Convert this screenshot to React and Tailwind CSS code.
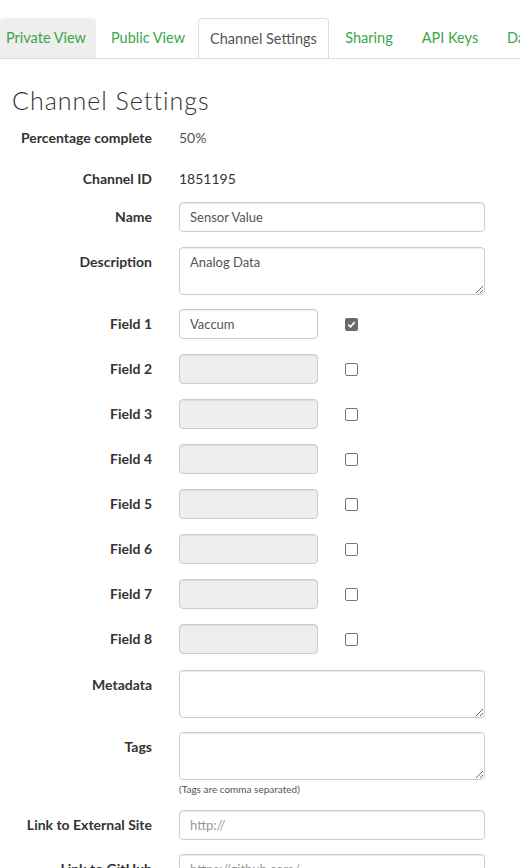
import React from "react";

const font = { fontFamily: "Lato, 'Liberation Sans', sans-serif" };

function Tab({ label, active, muted, className = "" }) {
  if (active) {
    return (
      <div
        className={`relative -mb-px flex h-[41px] shrink-0 items-center justify-center rounded-t-[4px] border border-b-0 border-[#ddd] bg-white text-[14.5px] text-[#555] ${className}`}
      >
        {label}
      </div>
    );
  }
  return (
    <div
      className={`flex h-[40px] shrink-0 items-center justify-center rounded-t-[4px] text-[14.5px] text-[#3aa648] ${
        muted ? "bg-[#eee]" : ""
      } ${className}`}
    >
      {label}
    </div>
  );
}

function Row({ label, children, className = "" }) {
  return (
    <div className={`flex ${className}`}>
      <div className="w-[152px] shrink-0 pt-[6px] text-right text-[14px] font-bold leading-[18px] text-[#333]">
        {label}
      </div>
      <div className="ml-[27px] flex-1">{children}</div>
    </div>
  );
}

function TextInput({ value, placeholder, disabled, className = "w-[306px]" }) {
  return (
    <input
      readOnly
      defaultValue={value}
      placeholder={placeholder}
      className={`h-[30px] rounded-[4px] border border-[#ccc] px-[10px] text-[13px] text-[#555] shadow-[inset_0_1px_1px_rgba(0,0,0,0.075)] outline-none placeholder:text-[#999] ${
        disabled ? "bg-[#eee]" : "bg-white"
      } ${className}`}
      style={font}
    />
  );
}

function TextArea({ value }) {
  return (
    <textarea
      readOnly
      defaultValue={value}
      className="block h-[48px] w-[306px] rounded-[4px] border border-[#ccc] bg-white px-[10px] py-[5px] text-[13px] leading-[18px] text-[#555] shadow-[inset_0_1px_1px_rgba(0,0,0,0.075)] outline-none"
      style={font}
    />
  );
}

function Check({ checked }) {
  if (checked) {
    return (
      <span className="flex h-[13px] w-[13px] items-center justify-center rounded-[2px] bg-[#6b6b6b]">
        <svg width="9" height="9" viewBox="0 0 10 10">
          <path d="M1.5 5.2 L4 7.6 L8.6 2.2" fill="none" stroke="#fff" strokeWidth="1.9" />
        </svg>
      </span>
    );
  }
  return <span className="block h-[13px] w-[13px] rounded-[2px] border border-[#767676] bg-white" />;
}

function FieldRow({ n, value, className = "mb-[15px]" }) {
  return (
    <Row label={`Field ${n}`} className={className}>
      <div className="flex items-center">
        <TextInput value={value} disabled={!value} className="w-[139px]" />
        <div className="ml-[27px]">
          <Check checked={!!value} />
        </div>
      </div>
    </Row>
  );
}

export default function App() {
  return (
    <div className="h-[868px] w-[520px] overflow-hidden bg-white pt-[18px]" style={font}>
      {/* tab strip */}
      <div className="flex overflow-hidden border-b border-[#ddd] whitespace-nowrap">
        <Tab label="Private View" muted className="w-[96px] pr-[4px]" />
        <Tab label="Public View" className="ml-[2px] w-[100px]" />
        <Tab label="Channel Settings" active className="w-[131px]" />
        <Tab label="Sharing" className="ml-[2px] w-[76px]" />
        <Tab label="API Keys" className="ml-[2px] w-[82px]" />
        <Tab label="Data Import / Export" className="ml-[2px] w-[160px] justify-start pl-[14px]" />
      </div>

      <h2 className="mt-[26px] pl-[12px] text-[25px] font-light leading-[30px] tracking-[1px] text-[#333]">
        Channel Settings
      </h2>

      <Row label="Percentage complete" className="mt-[8px] h-[30px]">
        <div className="pt-[6px] text-[14px] leading-[18px] text-[#555]">50%</div>
      </Row>
      <Row label="Channel ID" className="mt-[11px] h-[30px]">
        <div className="pt-[6px] text-[14px] leading-[18px] text-[#333]">1851195</div>
      </Row>

      <Row label="Name" className="mt-[8px] mb-[15px]">
        <TextInput value="Sensor Value" />
      </Row>
      <Row label="Description" className="mb-[14px]">
        <TextArea value="Analog Data" />
      </Row>

      <FieldRow n={1} value="Vaccum" />
      <FieldRow n={2} />
      <FieldRow n={3} />
      <FieldRow n={4} />
      <FieldRow n={5} />
      <FieldRow n={6} />
      <FieldRow n={7} />
      <FieldRow n={8} className="mb-[16px]" />

      <Row label="Metadata" className="mb-[14px]">
        <TextArea />
      </Row>
      <Row label="Tags">
        <TextArea />
        <div className="mt-[2px] text-[10px] leading-[14px] text-[#555]">(Tags are comma separated)</div>
      </Row>

      <Row label="Link to External Site" className="mt-[14px] mb-[14px]">
        <TextInput placeholder="http://" />
      </Row>
      <Row label="Link to GitHub">
        <TextInput placeholder="https://github.com/" />
      </Row>
    </div>
  );
}
